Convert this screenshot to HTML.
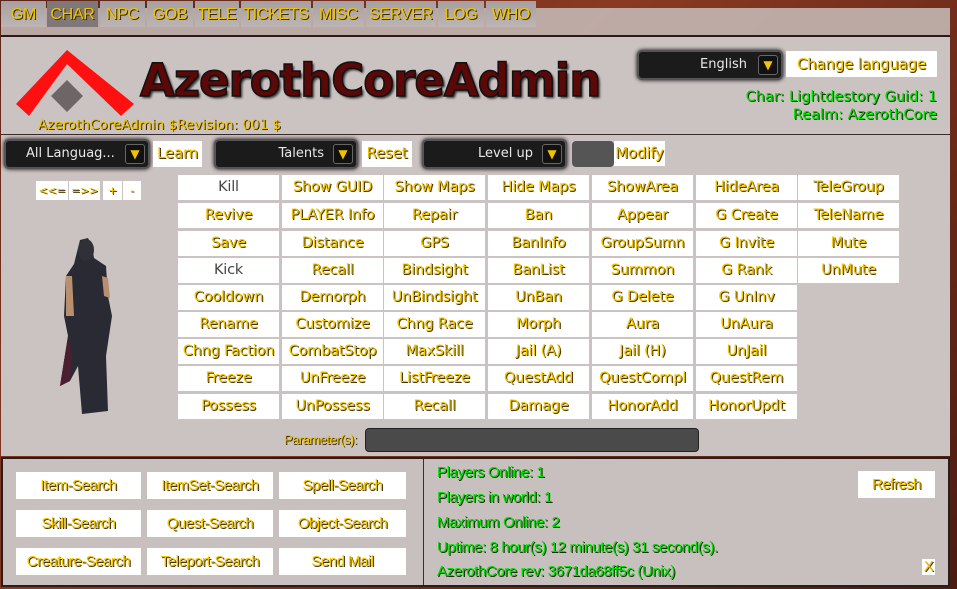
<!DOCTYPE html>
<html><head><meta charset="utf-8"><style>
*{margin:0;padding:0;box-sizing:border-box}
body{width:957px;height:589px;overflow:hidden;position:relative;background:linear-gradient(135deg,#5a2418 0%,#8a3a22 40%,#6a2a1a 70%,#4a1c12 100%);font-family:"DejaVu Sans","Liberation Sans",sans-serif}
.a{position:absolute}
.y{color:#f2c400;text-shadow:1px 1px 0 #3a2a00;}
.panel{left:1px;top:35px;width:949px;height:421px;background:#cbc3c2}
.tabs{left:1px;top:8px;width:949px;height:27px;background:rgba(200,190,188,.85)}
.tab{position:absolute;top:1px;height:26px;background:linear-gradient(#a8a0a0,#bdb5b4);font-size:16px;line-height:28px;text-align:center;color:#f2c400;text-shadow:1px 1px 0 #3a2a00;font-family:"Liberation Sans",sans-serif;letter-spacing:-0.3px}
.btn{position:absolute;background:#fff;text-align:center;font-size:14.5px;line-height:25px;color:#f2c400;text-shadow:1px 1px 0 #4a3500;white-space:nowrap;overflow:hidden;letter-spacing:-0.2px}
.k{color:#444;text-shadow:none}
.dd{position:absolute;height:30px;background:#1b1b1b;border:2px solid #555;border-radius:5px;box-shadow:0 0 4px #000;color:#e8e8e8;font-size:13px;line-height:26px}
.dd i{position:absolute;right:3px;top:3px;width:20px;height:20px;border:1px solid #666;border-radius:3px;background:#111;color:#f2c400;font-style:normal;font-size:12px;text-align:center;line-height:18px}
.g{color:#00e000;text-shadow:1px 1px 0 #113300;font-size:14.5px}
.sb{position:absolute;background:#fff;text-align:center;font-family:"Liberation Sans",sans-serif;font-size:15px;line-height:27px;color:#f2c400;text-shadow:1px 1px 0 #4a3500;white-space:nowrap;letter-spacing:-0.5px}
.gn{position:absolute;left:437px;font-family:"Liberation Sans",sans-serif;font-size:15px;color:#00dd00;text-shadow:1px 1px 0 #113300;letter-spacing:-0.4px}
</style></head><body>
<div class="a tabs"></div>
<div class="tab" style="left:1px;width:45px">GM</div>
<div class="tab" style="left:47px;width:51px;background:#807878">CHAR</div>
<div class="tab" style="left:100px;width:45px">NPC</div>
<div class="tab" style="left:147px;width:46px">GOB</div>
<div class="tab" style="left:195px;width:44px">TELE</div>
<div class="tab" style="left:241px;width:70px">TICKETS</div>
<div class="tab" style="left:313px;width:51px">MISC</div>
<div class="tab" style="left:366px;width:70px">SERVER</div>
<div class="tab" style="left:438px;width:46px">LOG</div>
<div class="tab" style="left:486px;width:50px">WHO</div>
<div class="a panel"></div>
<div class="a" style="left:1px;top:35px;width:949px;height:2px;background:#2a1a18"></div>
<div class="a" style="left:1px;top:134px;width:949px;height:1px;background:#3a2a28"></div>
<svg class="a" style="left:10px;top:40px" width="130" height="90"><polygon points="6,64 57,10 124,64 111,76 57,24 19,76" fill="#ff1010"/><polygon points="57,40 73,56 57,72 41,56" fill="#6e6666"/></svg>
<div class="a" style="left:140px;top:54px;font-family:'DejaVu Sans',sans-serif;font-weight:bold;font-size:45px;color:#5a0808;letter-spacing:-1px;-webkit-text-stroke:1.5px #111;text-shadow:2px 2px 2px #333">AzerothCoreAdmin</div>
<div class="a y" style="left:38px;top:117px;font-size:13.5px">AzerothCoreAdmin $Revision: 001 $</div>
<div class="dd" style="left:637px;top:50px;width:146px"><span style="position:absolute;right:34px">English</span><i>▼</i></div>
<div class="btn" style="left:786px;top:51px;width:151px;height:26px;font-size:15px;line-height:27px">Change language</div>
<div class="a g" style="right:20px;top:89px">Char: Lightdestory Guid: 1</div>
<div class="a g" style="right:20px;top:107px">Realm: AzerothCore</div>
<div class="dd" style="left:4px;top:139px;width:146px"><span style="position:absolute;left:20px">All Languag...</span><i>▼</i></div>
<div class="btn" style="left:153px;top:141px;width:49px;height:26px;font-size:15px">Learn</div>
<div class="dd" style="left:214px;top:139px;width:144px"><span style="position:absolute;right:32px">Talents</span><i>▼</i></div>
<div class="btn" style="left:362px;top:141px;width:50px;height:26px;font-size:15px">Reset</div>
<div class="dd" style="left:422px;top:139px;width:145px"><span style="position:absolute;right:32px">Level up</span><i>▼</i></div>
<div class="a" style="left:572px;top:141px;width:42px;height:26px;background:#555;border-radius:4px"></div>
<div class="btn" style="left:614px;top:141px;width:51px;height:25px;font-size:15px">Modify</div>
<div class="btn" style="left:36px;top:181px;width:32px;height:19px;font-size:11px;line-height:19px">&lt;&lt;=</div>
<div class="btn" style="left:69px;top:181px;width:31px;height:19px;font-size:11px;line-height:19px">=&gt;&gt;</div>
<div class="btn" style="left:103px;top:181px;width:19px;height:19px;font-size:11px;line-height:19px">+</div>
<div class="btn" style="left:123px;top:181px;width:18px;height:19px;font-size:11px;line-height:19px">-</div>
<svg class="a" style="left:50px;top:236px" width="70" height="182">
<path d="M30,4 L38,2 L42,10 L44,22 L56,30 L58,60 L62,80 L56,120 L58,175 L32,178 L28,130 L20,145 L10,150 L18,100 L14,80 L16,40 L24,28 Z" fill="#2a2a34"/>
<path d="M16,40 L22,40 L24,80 L16,80 Z" fill="#b89070"/>
<path d="M52,40 L58,42 L60,62 L54,60Z" fill="#b89070"/>
<path d="M10,150 L18,100 L22,120 L20,145Z" fill="#4a2030"/>
<ellipse cx="36" cy="14" rx="8" ry="11" fill="#303038"/>
</svg>
<div id="grid"></div>
<div class="a y" style="left:284px;top:432px;font-size:13px;font-family:'Liberation Sans',sans-serif;letter-spacing:-0.5px">Parameter(s):</div>
<div class="a" style="left:365px;top:428px;width:334px;height:24px;background:#4a4a4a;border:1px solid #222;border-radius:4px"></div>
<div class="a" style="left:1px;top:457px;width:949px;height:130px;background:#c8c0bf;border:2px solid #2a1e1c"></div>
<div class="a" style="left:423px;top:459px;width:1px;height:126px;background:#333"></div>
<div class="sb" style="left:16px;top:472px;width:125px">Item-Search</div>
<div class="sb" style="left:147px;top:472px;width:126px">ItemSet-Search</div>
<div class="sb" style="left:279px;top:472px;width:127px">Spell-Search</div>
<div class="sb" style="left:16px;top:510px;width:125px">Skill-Search</div>
<div class="sb" style="left:147px;top:510px;width:126px">Quest-Search</div>
<div class="sb" style="left:279px;top:510px;width:127px">Object-Search</div>
<div class="sb" style="left:16px;top:548px;width:125px">Creature-Search</div>
<div class="sb" style="left:147px;top:548px;width:126px">Teleport-Search</div>
<div class="sb" style="left:279px;top:548px;width:127px">Send Mail</div>
<div class="gn" style="top:464px">Players Online: 1</div>
<div class="gn" style="top:489px">Players in world: 1</div>
<div class="gn" style="top:514px">Maximum Online: 2</div>
<div class="gn" style="top:539px">Uptime: 8 hour(s) 12 minute(s) 31 second(s).</div>
<div class="gn" style="top:563px">AzerothCore rev: 3671da68ff5c (Unix)</div>
<div class="sb" style="left:858px;top:471px;width:77px">Refresh</div>
<div class="sb" style="left:922px;top:559px;width:13px;height:16px;line-height:16px">X</div>
<script>
var r=[["Kill*","Show GUID","Show Maps","Hide Maps","ShowArea","HideArea","TeleGroup"],
["Revive","PLAYER Info","Repair","Ban","Appear","G Create","TeleName"],
["Save","Distance","GPS","BanInfo","GroupSumn","G Invite","Mute"],
["Kick*","Recall","Bindsight","BanList","Summon","G Rank","UnMute"],
["Cooldown","Demorph","UnBindsight","UnBan","G Delete","G UnInv"],
["Rename","Customize","Chng Race","Morph","Aura","UnAura"],
["Chng Faction","CombatStop","MaxSkill","Jail (A)","Jail (H)","UnJail"],
["Freeze","UnFreeze","ListFreeze","QuestAdd","QuestCompl","QuestRem"],
["Possess","UnPossess","Recall","Damage","HonorAdd","HonorUpdt"]];
var xs=[178,282,384,488,592,696,798],ys=[175,203,231,258,285,312,339,366,394],h="";
r.forEach(function(row,i){row.forEach(function(t,j){var k=t.slice(-1)=="*";if(k)t=t.slice(0,-1);
h+='<div class="btn'+(k?' k':'')+'" style="left:'+xs[j]+'px;top:'+ys[i]+'px;width:101px;height:25px">'+t+'</div>';});});
document.getElementById("grid").innerHTML=h;
</script>
</body></html>
